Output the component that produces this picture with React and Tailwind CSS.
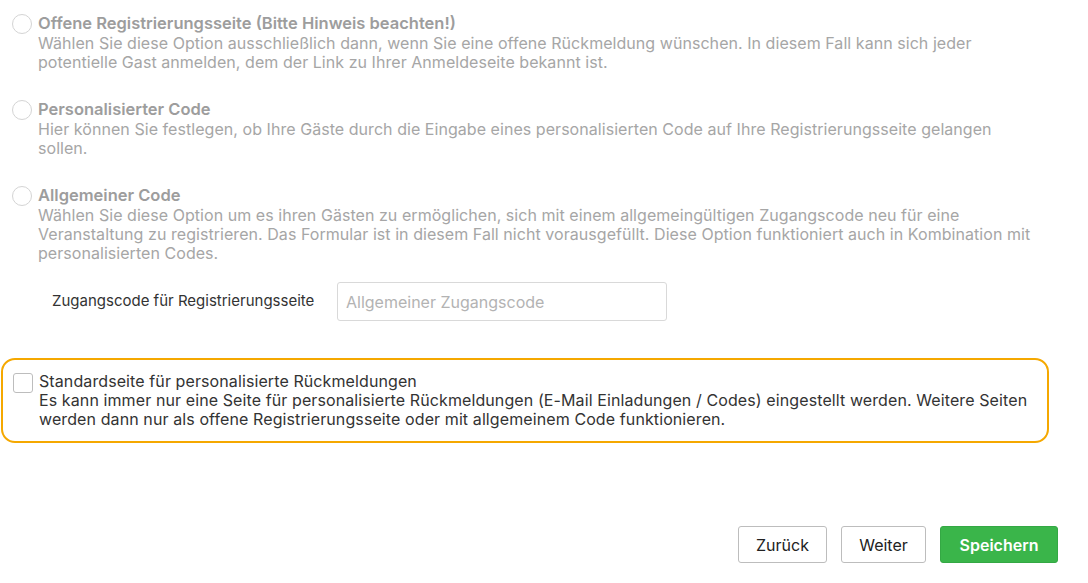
import { useState } from "react";

const font = { fontFamily: "Inter, 'Noto Sans', sans-serif" };

function Radio() {
  return (
    <span className="mt-[1px] h-[20px] w-[20px] shrink-0 rounded-full border border-[#d4d4d4] bg-white" />
  );
}

function Option({ title, lines }) {
  return (
    <div className="flex gap-[6px] pl-[12px]">
      <Radio />
      <div className="whitespace-nowrap text-[16px] leading-[19px] tracking-[0.05px] text-[#a6a6a6]">
        <div className="text-[16.5px] font-semibold leading-[21px] tracking-[0px] text-[#9d9d9d]">{title}</div>
        {lines.map((l) => (
          <div key={l}>{l}</div>
        ))}
      </div>
    </div>
  );
}

export default function App() {
  const [code, setCode] = useState("");
  const [checked, setChecked] = useState(false);

  return (
    <div className="h-[583px] w-[1088px] overflow-hidden bg-white" style={font}>
      <div className="flex flex-col pt-[13px]">
        <Option
          title="Offene Registrierungsseite (Bitte Hinweis beachten!)"
          lines={[
            "Wählen Sie diese Option ausschließlich dann, wenn Sie eine offene Rückmeldung wünschen. In diesem Fall kann sich jeder",
            "potentielle Gast anmelden, dem der Link zu Ihrer Anmeldeseite bekannt ist.",
          ]}
        />

        <div className="mt-[27px]">
          <Option
            title="Personalisierter Code"
            lines={[
              "Hier können Sie festlegen, ob Ihre Gäste durch die Eingabe eines personalisierten Code auf Ihre Registrierungsseite gelangen",
              "sollen.",
            ]}
          />
        </div>

        <div className="mt-[27px]">
          <Option
            title="Allgemeiner Code"
            lines={[
              "Wählen Sie diese Option um es ihren Gästen zu ermöglichen, sich mit einem allgemeingültigen Zugangscode neu für eine",
              "Veranstaltung zu registrieren. Das Formular ist in diesem Fall nicht vorausgefüllt. Diese Option funktioniert auch in Kombination mit",
              "personalisierten Codes.",
            ]}
          />
        </div>

        {/* Zugangscode */}
        <div className="mt-[19px] flex items-center pl-[52px]">
          <label className="w-[285px] whitespace-nowrap text-[15px] text-[#333]">Zugangscode für Registrierungsseite</label>
          <input
            value={code}
            onChange={(e) => setCode(e.target.value)}
            placeholder="Allgemeiner Zugangscode"
            className="h-[39px] w-[330px] rounded-[3px] border border-[#d9d9d9] px-[8px] text-[16px] text-[#333] outline-none placeholder:text-[#b3b3b3]"
          />
        </div>
      </div>

      {/* Standard page box */}
      <div className="mt-[37px] ml-[1px] w-[1048px] rounded-[14px] border-2 border-[#f5a800] py-[12px] pl-[10px] pr-[10px]">
        <label className="flex cursor-pointer gap-[6px]">
          <input
            type="checkbox"
            checked={checked}
            onChange={(e) => setChecked(e.target.checked)}
            className="mt-[1px] h-[20px] w-[20px] shrink-0 appearance-none rounded-[3px] border border-[#bdbdbd] bg-white checked:bg-[#3ab54a]"
          />
          <span className="whitespace-nowrap text-[16px] leading-[19px] tracking-[0.1px] text-[#333]">
            <span className="block">Standardseite für personalisierte Rückmeldungen</span>
            <span className="block">
              Es kann immer nur eine Seite für personalisierte Rückmeldungen (E-Mail Einladungen / Codes) eingestellt werden. Weitere Seiten
            </span>
            <span className="block">werden dann nur als offene Registrierungsseite oder mit allgemeinem Code funktionieren.</span>
          </span>
        </label>
      </div>

      {/* Buttons */}
      <div className="mt-[83px] flex justify-end gap-[14px] pr-[30px]">
        <button className="h-[37px] w-[89px] rounded-[3px] border border-[#bdbdbd] bg-white text-[16px] text-[#222]">Zurück</button>
        <button className="h-[37px] w-[85px] rounded-[3px] border border-[#bdbdbd] bg-white text-[16px] text-[#222]">Weiter</button>
        <button className="h-[37px] w-[118px] rounded-[3px] border border-[#34a844] bg-[#3ab54a] text-[16px] font-semibold text-white">Speichern</button>
      </div>
    </div>
  );
}
